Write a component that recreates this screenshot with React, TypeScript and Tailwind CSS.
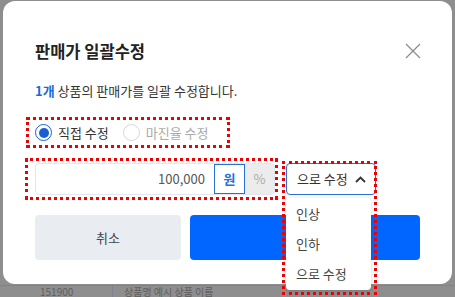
import { useState } from 'react'

const font = { fontFamily: '"Noto Sans CJK KR", "Noto Sans", sans-serif' }

export default function App() {
  const [mode, setMode] = useState<'direct' | 'margin'>('direct')
  const [unit, setUnit] = useState<'won' | 'pct'>('won')

  return (
    <div className="relative h-[297px] w-[455px] overflow-hidden bg-[#8e8e8e]" style={font}>
      {/* dimmed table behind the modal */}
      <div className="absolute left-0 right-0 top-[285px] h-px bg-[#7d8190]" />
      <div className="absolute bottom-0 left-[112px] top-[285px] w-px bg-[#7d8190]" />
      <div className="absolute left-[40px] top-[287px] text-[10px] leading-[10px] text-[#5f5f5f]">151900</div>
      <div className="absolute left-[124px] top-[287px] text-[10px] leading-[10px] text-[#5f5f5f]">상품명 예시 상품 이름</div>

      <div className="absolute left-[3px] top-[1px] h-[283px] w-[449px] rounded-[12px] bg-white px-[32px] pt-[38px]">
        <div className="flex items-center justify-between">
          <h1 className="text-[16.5px] font-bold leading-[24px] text-[#222]">판매가 일괄수정</h1>
          <button className="mr-[-3px] flex h-[20px] w-[20px] items-center justify-center">
            <svg width="16" height="16" viewBox="0 0 16 16" fill="none" stroke="#8a8a8a" strokeWidth="1.2">
              <path d="M1 1l14 14M15 1L1 15" />
            </svg>
          </button>
        </div>

        <p className="mt-[19px] text-[13px] leading-[18px] text-[#333]">
          <span className="font-semibold text-[#1a6be0]">1개</span> 상품의 판매가를 일괄 수정합니다.
        </p>

        <div className="ml-[-9px] mt-[17px] flex h-[31px] w-[204px] items-center gap-[14px] border-[3px] border-dotted border-[#ee0000] pl-[6px]">
          <button className="flex items-center gap-[6px]" onClick={() => setMode('direct')}>
            <span className="flex h-[17px] w-[17px] items-center justify-center rounded-full border-[1.5px] border-[#1a5fd0]">
              {mode === 'direct' && <span className="h-[10px] w-[10px] rounded-full bg-[#1a5fd0]" />}
            </span>
            <span className={`text-[13px] ${mode === 'direct' ? 'text-[#333]' : 'text-[#aaa]'}`}>직접 수정</span>
          </button>
          <button className="flex items-center gap-[6px]" onClick={() => setMode('margin')}>
            <span className="flex h-[17px] w-[17px] items-center justify-center rounded-full border border-[#d4d8e0]">
              {mode === 'margin' && <span className="h-[10px] w-[10px] rounded-full bg-[#1a5fd0]" />}
            </span>
            <span className={`text-[13px] ${mode === 'margin' ? 'text-[#333]' : 'text-[#aaa]'}`}>마진율 수정</span>
          </button>
        </div>

        <div className="mt-[10px] flex items-start gap-[8px]">
          <div className="ml-[-10px] flex h-[42px] w-[253px] items-center border-[3px] border-dotted border-[#ee0000] pl-[7px]">
            <div className="flex h-[32px] w-[240px] overflow-hidden rounded-[4px] border border-[#e3e6ec]">
              <div className="flex flex-1 items-center justify-end pr-[9px] text-[13px] text-[#555]">100,000</div>
              <button
                onClick={() => setUnit('won')}
                className={`flex w-[31px] items-center justify-center text-[13px] font-semibold ${unit === 'won' ? 'border border-[#2a6fd6] text-[#2a6fd6]' : 'bg-[#ececec] text-[#aaa]'}`}
              >
                원
              </button>
              <button
                onClick={() => setUnit('pct')}
                className={`flex w-[29px] items-center justify-center text-[13px] ${unit === 'pct' ? 'border border-[#2a6fd6] text-[#2a6fd6]' : 'bg-[#ececec] text-[#aaa]'}`}
              >
                %
              </button>
            </div>
          </div>

          <div className="relative mt-[5px] w-[90px]">
            <div className="pointer-events-none absolute left-[-4px] top-[-2px] z-20 h-[134px] w-[95px] border-[3px] border-dotted border-[#ee0000]" />
            <button className="flex h-[32px] w-[90px] items-center justify-between rounded-[4px] border border-[#2a6fd6] pl-[10px] pr-[9px] text-[13px] text-[#333]">
              <span>으로 수정</span>
              <svg width="11" height="7" viewBox="0 0 11 7" fill="none" stroke="#333" strokeWidth="1.8">
                <path d="M1 6l4.5-4.5L10 6" />
              </svg>
            </button>
            <div className="absolute left-0 top-[35px] z-10 w-[85px] rounded-[4px] bg-white py-[1px] shadow-[0_1px_4px_rgba(0,0,0,0.16)]">
              {['인상', '인하', '으로 수정'].map((t) => (
                <div key={t} className="flex h-[30px] items-center pl-[10px] text-[13px] text-[#444]">
                  {t}
                </div>
              ))}
            </div>
          </div>
        </div>

        <div className="mt-[15px] flex gap-[9px]">
          <button className="h-[45px] w-[146px] rounded-[4px] bg-[#e9edf2] text-[13px] text-[#444]">취소</button>
          <button className="h-[45px] flex-1 rounded-[4px] bg-[#0066ff] text-[13px] font-semibold text-white">수정</button>
        </div>
      </div>
    </div>
  )
}
